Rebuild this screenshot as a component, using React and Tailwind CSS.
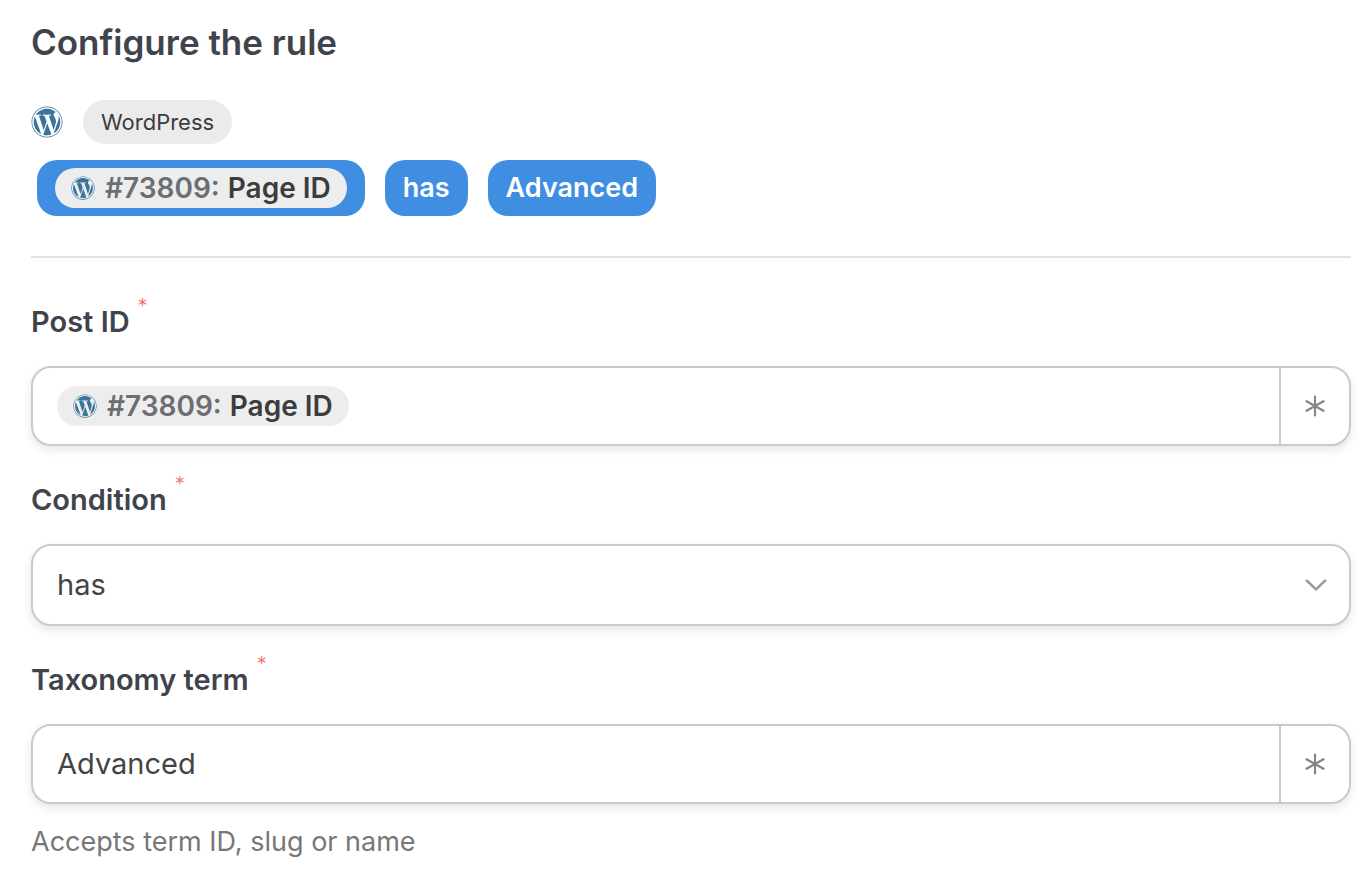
import { useState } from "react";
import { FaWordpress } from "react-icons/fa";

function TokenPill() {
  return (
    <span className="inline-flex h-10 shrink-0 items-center rounded-full bg-[#ededed] px-4 text-[28px] leading-10 font-semibold whitespace-nowrap text-[#3c3c3c]">
      <FaWordpress className="mr-2.5 size-6 text-[#38749b]" />
      <span className="mr-2 text-[#6b6e73]">#73809:</span>
      Page ID
    </span>
  );
}

function RuleChip({ children }) {
  return (
    <span className="flex h-14 items-center rounded-[20px] bg-[#408ee2] px-[18px] text-[27px] font-semibold text-white">
      {children}
    </span>
  );
}

function FieldLabel({ htmlFor, children }) {
  return (
    <label
      htmlFor={htmlFor}
      className="mb-[22px] flex h-11 items-center gap-2 text-[29px] font-semibold text-[#3f444c]"
    >
      {children}
      <span className="self-start text-xl leading-3 font-light text-[#f26d6d]">*</span>
    </label>
  );
}

function AsteriskButton({ label }) {
  return (
    <button
      type="button"
      aria-label={label}
      className="flex w-[70px] shrink-0 cursor-pointer items-center justify-center border-l-2 border-[#cacaca] text-[#858585]"
    >
      <svg viewBox="0 0 22 22" className="size-[22px]" fill="none" stroke="currentColor" strokeWidth="2.2" strokeLinecap="round">
        <path d="M11 1.5v19M2.5 6.2l17 9.6M19.5 6.2l-17 9.6" />
      </svg>
    </button>
  );
}

function App() {
  const [postId, setPostId] = useState("");
  const [condition, setCondition] = useState("has");
  const [term, setTerm] = useState("Advanced");

  return (
    <main className="min-h-screen bg-white pt-5 pr-[19px] pl-[31px] font-['Inter',sans-serif] text-[#444444]">
      <h1 className="text-[35px] leading-11 font-semibold text-[#3f444c]">Configure the rule</h1>

      {/* Rule summary */}
      <div className="mt-9 flex items-center gap-5">
        <FaWordpress className="size-8 text-[#38749b]" />
        <span className="flex h-11 items-center rounded-full bg-[#ebebeb] px-[18px] text-[22px] text-[#3c3c3c]">
          WordPress
        </span>
      </div>
      <div className="mt-4 ml-1.5 flex flex-wrap items-center gap-5">
        <RuleChip>
          <TokenPill />
        </RuleChip>
        <RuleChip>has</RuleChip>
        <RuleChip>Advanced</RuleChip>
      </div>

      <hr className="mt-10 border-t-2 border-[#e2e2e2]" />

      <form className="pt-2.5" onSubmit={(e) => e.preventDefault()}>
        {/* Post ID */}
        <div className="pt-8">
          <FieldLabel htmlFor="post-id">Post ID</FieldLabel>
          <div className="flex h-20 rounded-[20px] border-2 border-[#cacaca] bg-white shadow-[0_4px_10px_rgba(0,0,0,0.1)]">
            <div className="flex min-w-0 flex-1 items-center pl-6">
              <TokenPill />
              <input
                id="post-id"
                type="text"
                value={postId}
                onChange={(e) => setPostId(e.target.value)}
                className="h-full min-w-0 flex-1 px-2 text-[29px] outline-none"
              />
            </div>
            <AsteriskButton label="Map Post ID" />
          </div>
        </div>

        {/* Condition */}
        <div className="pt-8">
          <FieldLabel htmlFor="condition">Condition</FieldLabel>
          <div className="relative">
            <select
              id="condition"
              value={condition}
              onChange={(e) => setCondition(e.target.value)}
              className="block h-[82px] w-full appearance-none rounded-[20px] border-2 border-[#cacaca] bg-white px-6 text-[29px] shadow-[0_4px_10px_rgba(0,0,0,0.1)] outline-none"
            >
              <option value="has">has</option>
              <option value="has-not">does not have</option>
            </select>
            <svg
              viewBox="0 0 22 12"
              className="pointer-events-none absolute inset-y-0 right-6 my-auto h-3 w-[22px] text-[#9a9a9a]"
              fill="none"
              stroke="currentColor"
              strokeWidth="2.6"
              strokeLinecap="round"
              strokeLinejoin="round"
            >
              <path d="M1.8 1.6l9.2 8.8 9.2-8.8" />
            </svg>
          </div>
        </div>

        {/* Taxonomy term */}
        <div className="pt-8">
          <FieldLabel htmlFor="taxonomy-term">Taxonomy term</FieldLabel>
          <div className="flex h-20 rounded-[20px] border-2 border-[#cacaca] bg-white shadow-[0_4px_10px_rgba(0,0,0,0.1)]">
            <input
              id="taxonomy-term"
              type="text"
              value={term}
              onChange={(e) => setTerm(e.target.value)}
              aria-describedby="taxonomy-help"
              className="min-w-0 flex-1 px-6 text-[29px] outline-none"
            />
            <AsteriskButton label="Map Taxonomy term" />
          </div>
          <p id="taxonomy-help" className="mt-5 text-[27px] leading-9 text-[#777777]">
            Accepts term ID, slug or name
          </p>
        </div>
      </form>
    </main>
  );
}

export default App;
